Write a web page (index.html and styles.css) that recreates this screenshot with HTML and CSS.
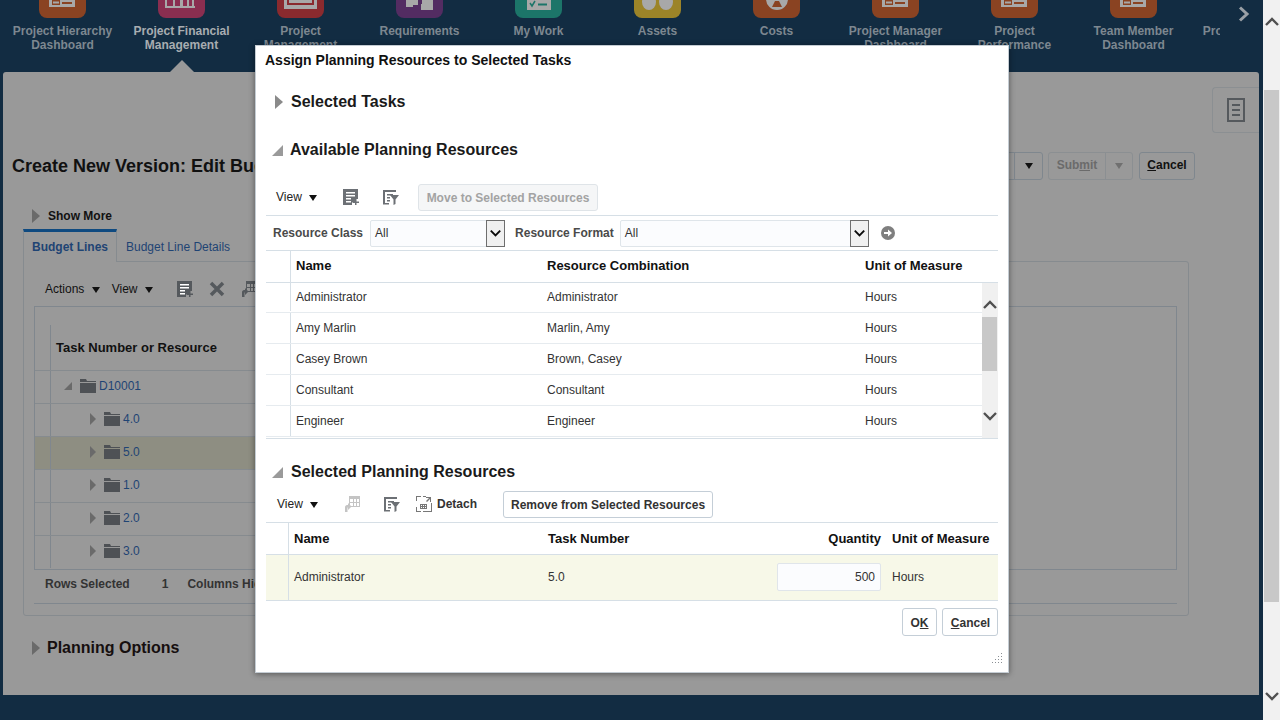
FILE: index.html
```html
<!DOCTYPE html>
<html lang="en">
<head>
    <meta charset="UTF-8">
    <title>Assign Planning Resources to Selected Tasks</title>
    <link rel="stylesheet" href="styles.css">
</head>
<body>
    <svg class="icon-defs" width="0" height="0">
        <symbol id="i-card" viewBox="0 0 47 18"><path d="M10 0h26v7H10z" fill="#a8a8a8"/><path d="M13 0h8v5h-8zM23 2h10v2H23z" fill="currentColor"/><path d="M14 1.500h6v2h-6z" fill="#a8a8a8"/></symbol>
        <symbol id="i-add" viewBox="0 0 16 16"><path d="M0 0h15v10h-3v3H9v3H0z" fill="currentColor"/><path d="M3 3h9v1.500H3zM3 6h9v1.500H3zM3 9h5v1.500H3zM3 12h5v1.500H3z" fill="#fff"/><path d="M12 10h1.500v2.500H16V14h-2.500v2H12v-2H9.500v-1.500H12z" fill="currentColor"/></symbol>
        <symbol id="i-filter" viewBox="0 0 16 16"><path d="M0 1h13v2H0zM0 1h2v14H0zM0 14h6v1.500H0zM4 5h6v1.500H4zM4 8h3v1.500H4zM4 11h3v1.500H4z" fill="currentColor"/><path d="M7 6h9l-3.500 4.500V15l-2 1v-5.500z" fill="currentColor"/></symbol>
        <symbol id="i-move" viewBox="0 0 16 16"><path d="M5 0h11v3H5zM5 3h1v8H5zM15 3h1v8h-1zM5 10h11v1H5zM5 6h11v1H5zM9 3h1v8H9zM12 3h1v8h-1z" fill="currentColor"/><path d="M1 16v-5c0-1 1-2 2-2h1V7l3.500 3.500L4 14v-2.500H3.500V16z" fill="currentColor"/></symbol>
        <symbol id="i-folder" viewBox="0 0 16 14"><path d="M0 0h6l1 2h9v1H0zM0 4h16v10H0z" fill="currentColor"/></symbol>
        <symbol id="i-detach" viewBox="0 0 16 16"><path d="M0 0h5v1H1v4H0zM0 11h1v4h4v1H0zM7 15h9v1H7zM15 7h1v9h-1zM7 0h3v1H7z" fill="#777"/><path d="M4 8h7v5H4zM5 9v1h1V9zm2 0v1h1V9zm2 0v1h1V9zm-4 2v1h1v-1zm2 0v1h1v-1zm2 0v1h1v-1z" fill="#777"/><path d="M10 1h5v5h-1V3l-3 3-1-1 3-3h-3z" fill="#777"/></symbol>
        <symbol id="i-chev-up" viewBox="0 0 14 10"><path d="M1 8l6-6 6 6" fill="none" stroke="currentColor" stroke-width="2.400"/></symbol>
        <symbol id="i-chev-down" viewBox="0 0 14 10"><path d="M1 2l6 6 6-6" fill="none" stroke="currentColor" stroke-width="2.400"/></symbol>
    </svg>

    <div class="page">
        <nav class="nav">
            <div class="nav-list">
                <a class="nav-item"><span class="tile tile-orange"><svg width="47" height="18"><use href="#i-card"/></svg></span><span class="nav-label">Project Hierarchy Dashboard</span></a>
                <a class="nav-item active"><span class="tile tile-pink"><svg width="47" height="18" viewBox="0 0 47 18"><path d="M7 0h2v6h6V0h2v6h5V0h3v6h4V0h2v6h3V0h2v6h1v2H7z" fill="#a8a8a8"/></svg></span><span class="nav-label">Project Financial Management</span></a>
                <a class="nav-item"><span class="tile tile-red"><svg width="47" height="18" viewBox="0 0 47 18"><path d="M7 0h33v9H7z" fill="#a8a8a8"/><path d="M10 0h27v5H10z" fill="#8a2a2e"/><path d="M12 0h23v3H12z" fill="#a8a8a8"/></svg></span><span class="nav-label">Project Management Dashboard</span></a>
                <a class="nav-item"><span class="tile tile-purple"><svg width="47" height="18" viewBox="0 0 47 18"><path d="M10 0h12v5h-5v2h-7zM26 0h11v10H25V4h1z" fill="#a8a8a8"/></svg></span><span class="nav-label">Requirements</span></a>
                <a class="nav-item"><span class="tile tile-teal"><svg width="47" height="18" viewBox="0 0 47 18"><path d="M12 0h24v10H12z" fill="#a8a8a8"/><path d="M15 3l2 3 3-5" fill="none" stroke="#1c7569" stroke-width="1.500"/><path d="M23 3.500h9v2h-9z" fill="#1c7569"/></svg></span><span class="nav-label">My Work</span></a>
                <a class="nav-item"><span class="tile tile-yellow"><svg width="47" height="18" viewBox="0 0 47 18"><ellipse cx="15" cy="2" rx="7" ry="8" fill="#a8a8a8"/><ellipse cx="32" cy="2" rx="7" ry="8" fill="#a8a8a8"/></svg></span><span class="nav-label">Assets</span></a>
                <a class="nav-item"><span class="tile tile-orange"><svg width="47" height="18" viewBox="0 0 47 18"><circle cx="24" cy="-1" r="11" fill="#a8a8a8"/><path d="M19 7l3-6h4l3 6z" fill="#8a4322"/></svg></span><span class="nav-label">Costs</span></a>
                <a class="nav-item"><span class="tile tile-orange"><svg width="47" height="18"><use href="#i-card"/></svg></span><span class="nav-label">Project Manager Dashboard</span></a>
                <a class="nav-item"><span class="tile tile-orange"><svg width="47" height="18"><use href="#i-card"/></svg></span><span class="nav-label">Project Performance Dashboard</span></a>
                <a class="nav-item"><span class="tile tile-orange"><svg width="47" height="18"><use href="#i-card"/></svg></span><span class="nav-label">Team Member Dashboard</span></a>
                <a class="nav-item"><span class="tile"></span><span class="nav-label">Project Hierarchy</span></a>
            </div>
            <svg class="nav-next" width="14" height="16" viewBox="0 0 14 16"><path d="M3 1.500L10 8l-7 6.500" fill="none" stroke="currentColor" stroke-width="3"/></svg>
        </nav>

        <main class="panel">
            <div class="side-row">
                <div class="side-tab">
                    <svg width="18" height="24" viewBox="0 0 18 24"><path d="M1 1h16v22H1z" fill="none" stroke="currentColor" stroke-width="2"/><path d="M5 6h8v2H5zM5 11h8v2H5zM5 16h8v2H5z" fill="currentColor"/></svg>
                </div>
            </div>

            <div class="title-row">
                <h1 class="page-title">Create New Version: Edit Budget</h1>
                <div class="page-actions">
                    <span class="split-btn"><span class="split-caret"><i class="caret"></i></span></span>
                    <span class="submit-btn"><span class="submit-text">Sub<u>m</u>it</span><span class="split-caret"><i class="caret caret-dim"></i></span></span>
                    <span class="back-btn"><u>C</u>ancel</span>
                </div>
            </div>

            <div class="show-more"><i class="tri-right tri-back"></i>Show More</div>

            <div class="tabs">
                <span class="tab tab-active">Budget Lines</span>
                <span class="tab">Budget Line Details</span>
            </div>

            <section class="tab-box">
                <div class="back-toolbar">
                    <span class="menu-item">Actions <i class="caret"></i></span>
                    <span class="menu-item">View <i class="caret"></i></span>
                    <svg class="back-icon first" width="16" height="16"><use href="#i-add"/></svg>
                    <svg class="back-icon" width="16" height="16" viewBox="0 0 16 16"><path d="M2 2l12 12M14 2L2 14" stroke="currentColor" stroke-width="3.500"/></svg>
                    <svg class="back-icon" width="16" height="16"><use href="#i-move"/></svg>
                </div>
                <div class="back-table">
                    <div class="tree">
                        <div class="tree-head"><span class="tree-gutter"></span><span class="tree-title">Task Number or Resource</span></div>
                        <div class="tree-row"><span class="tree-gutter"></span><span class="tree-cell depth-0"><i class="tri-open tri-small"></i><svg class="folder" width="16" height="14"><use href="#i-folder"/></svg><a>D10001</a></span></div>
                        <div class="tree-row"><span class="tree-gutter"></span><span class="tree-cell depth-1"><i class="tri-right tri-small"></i><svg class="folder" width="16" height="14"><use href="#i-folder"/></svg><a>4.0</a></span></div>
                        <div class="tree-row selected"><span class="tree-gutter"></span><span class="tree-cell depth-1"><i class="tri-right tri-small"></i><svg class="folder" width="16" height="14"><use href="#i-folder"/></svg><a>5.0</a></span></div>
                        <div class="tree-row"><span class="tree-gutter"></span><span class="tree-cell depth-1"><i class="tri-right tri-small"></i><svg class="folder" width="16" height="14"><use href="#i-folder"/></svg><a>1.0</a></span></div>
                        <div class="tree-row"><span class="tree-gutter"></span><span class="tree-cell depth-1"><i class="tri-right tri-small"></i><svg class="folder" width="16" height="14"><use href="#i-folder"/></svg><a>2.0</a></span></div>
                        <div class="tree-row"><span class="tree-gutter"></span><span class="tree-cell depth-1"><i class="tri-right tri-small"></i><svg class="folder" width="16" height="14"><use href="#i-folder"/></svg><a>3.0</a></span></div>
                    </div>
                </div>
                <div class="back-status"><span>Rows Selected</span><span class="status-num">1</span><span>Columns Hidden</span></div>
            </section>

            <div class="planning"><i class="tri-right tri-back"></i>Planning Options</div>
        </main>
    </div>

    <div class="page-scroll">
        <svg width="14" height="10"><use href="#i-chev-up"/></svg>
        <div class="page-thumb"></div>
        <svg width="14" height="10"><use href="#i-chev-down"/></svg>
    </div>

    <!-- dialog -->
    <div class="dialog">
        <div class="dialog-title">Assign Planning Resources to Selected Tasks</div>

        <h2 class="section-head closed"><i class="tri-right"></i>Selected Tasks</h2>
        <h2 class="section-head available"><i class="tri-open"></i>Available Planning Resources</h2>

        <div class="toolbar toolbar-top">
            <span class="view-menu">View <i class="caret"></i></span>
            <svg class="tool-icon add" width="16" height="16"><use href="#i-add"/></svg>
            <svg class="tool-icon filter" width="16" height="16"><use href="#i-filter"/></svg>
            <button class="btn btn-disabled">Move to Selected Resources</button>
        </div>

        <div class="filter-row">
            <label class="filter-label">Resource Class</label>
            <span class="select select-class"><span class="select-value">All</span><span class="select-arrow"><svg width="11" height="8"><use href="#i-chev-down"/></svg></span></span>
            <label class="filter-label">Resource Format</label>
            <span class="select select-format"><span class="select-value">All</span><span class="select-arrow"><svg width="11" height="8"><use href="#i-chev-down"/></svg></span></span>
            <svg class="go-icon" width="14" height="14" viewBox="0 0 14 14"><circle cx="7" cy="7" r="7" fill="#7f7f7f"/><path d="M3 6h4V3.500L11 7l-4 3.500V8H3z" fill="#fff"/></svg>
        </div>

        <div class="res-row res-head">
            <span class="gutter"></span><span>Name</span><span>Resource Combination</span><span>Unit of Measure</span>
        </div>

        <div class="res-list">
            <div class="res-rows">
                <div class="res-row"><span class="gutter"></span><span>Administrator</span><span>Administrator</span><span>Hours</span></div>
                <div class="res-row"><span class="gutter"></span><span>Amy Marlin</span><span>Marlin, Amy</span><span>Hours</span></div>
                <div class="res-row"><span class="gutter"></span><span>Casey Brown</span><span>Brown, Casey</span><span>Hours</span></div>
                <div class="res-row"><span class="gutter"></span><span>Consultant</span><span>Consultant</span><span>Hours</span></div>
                <div class="res-row"><span class="gutter"></span><span>Engineer</span><span>Engineer</span><span>Hours</span></div>
            </div>
            <div class="list-scroll">
                <svg width="14" height="10"><use href="#i-chev-up"/></svg>
                <div class="list-thumb"></div>
                <svg class="list-down" width="14" height="10"><use href="#i-chev-down"/></svg>
            </div>
        </div>

        <h2 class="section-head selected-head"><i class="tri-open"></i>Selected Planning Resources</h2>

        <div class="toolbar toolbar-sel">
            <span class="view-menu">View <i class="caret"></i></span>
            <svg class="tool-icon move" width="16" height="16"><use href="#i-move"/></svg>
            <svg class="tool-icon filter" width="16" height="16"><use href="#i-filter"/></svg>
            <svg class="tool-icon detach" width="16" height="16"><use href="#i-detach"/></svg>
            <span class="detach-text">Detach</span>
            <button class="btn">Remove from Selected Resources</button>
        </div>

        <div class="sel-row sel-head">
            <span class="gutter"></span><span>Name</span><span>Task Number</span><span class="qty">Quantity</span><span>Unit of Measure</span>
        </div>
        <div class="sel-row sel-body">
            <span class="gutter"></span><span>Administrator</span><span>5.0</span><span class="qty"><span class="qty-input">500</span></span><span>Hours</span>
        </div>

        <div class="dialog-actions">
            <button class="btn btn-ok">O<u>K</u></button>
            <button class="btn btn-cancel"><u>C</u>ancel</button>
        </div>

        <svg class="grip" width="11" height="11" viewBox="0 0 11 11"><path d="M9 0h1v1H9zM6 3h1v1H6zM9 3h1v1H9zM3 6h1v1H3zM6 6h1v1H6zM9 6h1v1H9zM0 9h1v1H0zM3 9h1v1H3zM6 9h1v1H6zM9 9h1v1H9z" fill="#8a8f94"/></svg>
    </div>
</body>
</html>
```

FILE: styles.css
```css
* {
    box-sizing: border-box;
    margin: 0;
    padding: 0;
}

html, body {
    height: 720px;
    overflow: hidden;
}

body {
    background-color: #122c42;
    color: #111;
    font-family: "Liberation Sans", Arial, sans-serif;
    font-size: 12px;
    position: relative;
    width: 1280px;
}

.icon-defs {
    position: absolute;
}

.page {
    width: 1263px;
}

/* top navigation */
.nav {
    display: flex;
    height: 72px;
    padding-left: 3px;
    position: relative;
}

.nav-list {
    display: flex;
    overflow: hidden;
    width: 1217px;
}

.nav-item {
    align-items: center;
    color: #7d8790;
    display: flex;
    flex: none;
    flex-direction: column;
    font-weight: bold;
    position: relative;
    width: 119px;
}

.nav-item.active {
    color: #a8adb1;
}

.nav-item.active::after {
    border-bottom: 12px solid #999;
    border-left: 12px solid transparent;
    border-right: 12px solid transparent;
    bottom: 0;
    content: "";
    left: 48px;
    position: absolute;
}

.tile {
    border-radius: 0 0 8px 8px;
    color: #8a4322;
    display: block;
    height: 18px;
    overflow: hidden;
    width: 47px;
}

.tile svg {
    display: block;
}

.tile-orange { background-color: #8a4322; }
.tile-pink { background-color: #8a2e50; }
.tile-red { background-color: #8a2a2e; }
.tile-purple { background-color: #532c62; }
.tile-teal { background-color: #1c7569; }
.tile-yellow { background-color: #9c8428; }

.nav-label {
    line-height: 14px;
    margin-top: 6px;
    max-height: 30px;
    overflow: hidden;
    text-align: center;
    width: 105px;
}

.nav-next {
    color: #9aa0a6;
    margin: 6px 0 0 17px;
}

/* page behind the dialog */
.panel {
    background-color: #999;
    border-radius: 3px 3px 0 0;
    height: 623px;
    margin: 0 4px 0 3px;
}

.side-row {
    display: flex;
    justify-content: flex-end;
    padding-top: 15px;
}

.side-tab {
    align-items: center;
    border: 1px solid #8b8f92;
    border-radius: 4px 0 0 4px;
    border-right: 0;
    color: #55595d;
    display: flex;
    height: 46px;
    justify-content: center;
    width: 47px;
}

.title-row {
    align-items: center;
    display: flex;
    height: 29px;
    justify-content: space-between;
    margin-top: 19px;
    padding: 0 64px 0 9px;
}

.page-title {
    font-size: 18px;
}

.page-actions {
    align-items: center;
    align-self: flex-start;
    display: flex;
}

.split-btn,
.submit-btn,
.back-btn {
    align-items: center;
    border: 1px solid #7f878e;
    border-radius: 3px;
    display: flex;
    height: 28px;
}

.split-btn {
    justify-content: flex-end;
    margin-right: 5px;
    width: 60px;
}

.split-caret {
    align-items: center;
    border-left: 1px solid #7f878e;
    display: flex;
    height: 26px;
    justify-content: center;
    width: 28px;
}

.submit-btn {
    border-color: #8b8f92;
    color: #6b6b6b;
    font-weight: bold;
    margin-right: 6px;
    width: 85px;
}

.submit-btn .split-caret {
    border-left-color: #8b8f92;
    width: 27px;
}

.submit-text {
    flex: 1;
    padding-bottom: 2px;
    text-align: center;
}

.back-btn {
    font-weight: bold;
    justify-content: center;
    padding-bottom: 2px;
    width: 56px;
}

.caret {
    border-left: 4.500px solid transparent;
    border-right: 4.500px solid transparent;
    border-top: 6px solid #111;
    display: inline-block;
    margin-left: 4px;
    vertical-align: middle;
}

.caret-dim {
    border-top-color: #707070;
    margin-left: 0;
}

.split-caret .caret {
    margin-left: 0;
}

.tri-right {
    border-bottom: 7px solid transparent;
    border-left: 8px solid #6a6a6a;
    border-top: 7px solid transparent;
    display: inline-block;
}

.tri-open {
    border-bottom: 11px solid #9a9a9a;
    border-left: 11px solid transparent;
    display: inline-block;
}

.tri-small {
    border-bottom-width: 6px;
    border-left-width: 6px;
    border-top-width: 6px;
}

.tri-open.tri-small {
    border-bottom: 8px solid #6a6a6a;
    border-left: 8px solid transparent;
}

.show-more {
    align-items: center;
    display: flex;
    font-weight: bold;
    height: 18px;
    margin-top: 26px;
    padding-left: 29px;
}

.tri-back {
    margin-right: 8px;
}

.tabs {
    display: flex;
    height: 32px;
    margin: 4px 0 0 20px;
}

.tab {
    align-items: center;
    color: #1f4474;
    display: flex;
    padding: 3px 9px 0;
    white-space: nowrap;
}

.tab-active {
    background-color: #999;
    border-left: 1px solid #868b8f;
    border-right: 1px solid #868b8f;
    border-top: 3px solid #0f4a80;
    font-weight: bold;
    margin-bottom: -1px;
    padding: 0 0 0 8px;
    position: relative;
    width: 94px;
}

.tab-box {
    border: 1px solid #868b8f;
    border-radius: 0 3px 3px 3px;
    height: 355px;
    margin-left: 20px;
    padding: 0 10px;
    width: 1166px;
}

.back-toolbar {
    align-items: center;
    display: flex;
    height: 44px;
    padding: 10px 0 0 11px;
}

.menu-item {
    margin-right: 12px;
}

.back-icon {
    color: #55595d;
    margin-right: 16px;
}

.back-icon.first {
    margin-left: 12px;
}

.back-table {
    border: 1px solid #80878e;
    height: 264px;
    width: 1143px;
}

.tree {
    width: 400px;
}

.tree-head {
    display: flex;
    height: 63px;
    padding-top: 18px;
}

.tree-head .tree-gutter {
    border-right: 1px solid #80878e;
}

.tree-title {
    align-self: center;
    font-size: 13px;
    font-weight: bold;
    padding-left: 5px;
}

.tree-gutter {
    flex: none;
    width: 16px;
}

.tree-row {
    border-top: 1px solid #868b8f;
    display: flex;
    height: 33px;
}

.tree-row .tree-gutter {
    border-right: 1px solid #80878e;
}

.tree-row.selected {
    background-color: #8e8e82;
}

.tree-cell {
    align-items: center;
    display: flex;
    flex: 1;
    padding-bottom: 2px;
}

.tree-cell a {
    color: #1f4474;
    margin-left: 3px;
}

.depth-0 {
    padding-left: 13px;
}

.depth-1 {
    padding-left: 39px;
}

.tree-cell .folder {
    color: #4e5155;
    margin-left: 8px;
}

.back-status {
    align-items: center;
    border-bottom: 1px solid #80878e;
    color: #333;
    display: flex;
    font-weight: bold;
    height: 34px;
    padding: 0 0 6px 11px;
    width: 1143px;
}

.status-num {
    margin: 0 19px 0 32px;
}

.planning {
    align-items: center;
    color: #160f0f;
    display: flex;
    font-size: 16px;
    font-weight: bold;
    height: 20px;
    margin-top: 22px;
    padding-left: 29px;
}

.planning .tri-back {
    margin-right: 7px;
}

/* browser scrollbar */
.page-scroll {
    align-items: center;
    background-color: #f1f1f1;
    bottom: 0;
    color: #505050;
    display: flex;
    flex-direction: column;
    position: absolute;
    right: 0;
    top: 0;
    width: 17px;
}

.page-scroll svg:first-child {
    margin-top: 17px;
}

.page-thumb {
    background-color: #c8c8c8;
    height: 512px;
    margin: 63px 0 89px;
    width: 15px;
}

/* dialog */
.dialog {
    background-color: #fff;
    border: 1px solid #c4ccd3;
    box-shadow: 0 1px 6px rgba(0, 0, 0, 0.45);
    height: 628px;
    left: 255px;
    padding: 0 10px;
    position: absolute;
    top: 45px;
    width: 754px;
}

.dialog-title {
    align-items: center;
    color: #111;
    display: flex;
    font-size: 14px;
    font-weight: bold;
    height: 28px;
    margin-left: -1px;
}

.section-head {
    align-items: center;
    color: #1a1a1a;
    display: flex;
    font-size: 16px;
    height: 22px;
}

.section-head.closed {
    margin-top: 17px;
    padding-left: 9px;
}

.section-head.closed .tri-right {
    border-left-color: #8a8a8a;
    margin-right: 8px;
}

.section-head.available {
    margin-top: 26px;
    padding-left: 6px;
}

.section-head.available .tri-open {
    margin-right: 7px;
}

.section-head.selected-head {
    margin-top: 22px;
    padding-left: 6px;
}

.section-head.selected-head .tri-open {
    margin-right: 8px;
}

.toolbar {
    align-items: center;
    border-bottom: 1px solid #d6dfe6;
    display: flex;
}

.toolbar-top {
    height: 34px;
    margin-top: 21px;
    padding: 0 0 3px 10px;
}

.toolbar-sel {
    height: 40px;
    padding: 3px 0 0 11px;
}

.view-menu {
    color: #222;
}

.toolbar-top .view-menu {
    width: 67px;
}

.toolbar-sel .view-menu {
    width: 67px;
}

.tool-icon {
    color: #6c7075;
    flex: none;
}

.tool-icon.filter {
    margin-left: 24px;
}

.tool-icon.move {
    color: #c4c4c4;
}

.tool-icon.detach {
    margin-left: 16px;
}

.detach-text {
    color: #333;
    font-weight: bold;
    margin-left: 5px;
}

.btn {
    background-color: #fff;
    border: 1px solid #c4ced7;
    border-radius: 3px;
    color: #333;
    font-family: inherit;
    font-size: 12px;
    font-weight: bold;
    height: 28px;
    padding: 0;
    white-space: nowrap;
}

.toolbar-top .btn {
    height: 27px;
    margin: 1px 0 0 19px;
    width: 180px;
}

.toolbar-sel .btn {
    height: 27px;
    margin: 1px 0 0 26px;
    width: 210px;
}

.btn-disabled {
    background-color: #f5f6f7;
    border-color: #dfe4e8;
    color: #a3a3a3;
}

.filter-row {
    align-items: center;
    border-bottom: 1px solid #d6dfe6;
    display: flex;
    height: 35px;
    padding-left: 7px;
}

.filter-label {
    color: #4a4a4a;
    font-weight: bold;
}

.select {
    background-color: #fbfcfe;
    border: 1px solid #dfe5ea;
    border-radius: 2px;
    display: flex;
    height: 27px;
    margin: 0 10px 0 7px;
}

.select-class {
    width: 135px;
}

.select-format {
    margin-left: 6px;
    width: 249px;
}

.select-value {
    align-self: center;
    color: #333;
    flex: 1;
    padding-left: 4px;
}

.select-arrow {
    align-items: center;
    background-color: #f0f0f0;
    border: 1px solid #6e6e6e;
    color: #0a0a0a;
    display: flex;
    justify-content: center;
    margin: -1px -1px -1px 0;
    width: 19px;
}

.go-icon {
    margin-left: 2px;
}

.res-row {
    align-items: center;
    border-bottom: 1px solid #e6ebef;
    color: #333;
    display: grid;
    grid-template-columns: 25px 251px 318px 1fr;
    height: 31px;
}

.res-row > span:not(.gutter) {
    padding-left: 5px;
}

.res-rows .res-row:first-child {
    height: 30px;
    padding-bottom: 1px;
}

.gutter {
    align-self: stretch;
    border-right: 1px solid #d6dfe6;
}

.res-head {
    border-bottom: 1px solid #d6dfe6;
    color: #111;
    font-size: 13px;
    font-weight: bold;
    height: 32px;
    padding-bottom: 2px;
}

.res-head .gutter {
    margin-bottom: -2px;
}

.res-list {
    border-bottom: 1px solid #d6dfe6;
    display: flex;
    height: 156px;
    overflow: hidden;
}

.res-rows {
    flex: 1;
}

.list-scroll {
    align-items: center;
    background-color: #f0f0f0;
    color: #505050;
    display: flex;
    flex: none;
    flex-direction: column;
    width: 16px;
}

.list-scroll svg:first-child {
    margin-top: 17px;
}

.list-thumb {
    background-color: #c8c8c8;
    height: 54px;
    margin: 7px 1px 0 0;
    width: 15px;
}

.list-down {
    margin-top: 40px;
}

.sel-row {
    align-items: center;
    border-bottom: 1px solid #d6dfe6;
    display: grid;
    grid-template-columns: 23px 254px 227px 117px 1fr;
}

.sel-row > span:not(.gutter) {
    padding-left: 5px;
}

.sel-row > .qty {
    padding-left: 0;
    padding-right: 6px;
    text-align: right;
}

.sel-head {
    color: #111;
    font-size: 13px;
    font-weight: bold;
    height: 32px;
}

.sel-body {
    background-color: #f7f8e8;
    color: #333;
    height: 46px;
    padding-bottom: 2px;
}

.sel-body .gutter {
    margin-bottom: -2px;
}

.qty-input {
    background-color: #fbfcfe;
    border: 1px solid #e0e5ea;
    border-radius: 2px;
    display: inline-block;
    height: 28px;
    line-height: 26px;
    padding-right: 5px;
    width: 104px;
}

.dialog-actions {
    display: flex;
    gap: 5px;
    justify-content: flex-end;
    margin-top: 7px;
}

.btn-ok {
    padding-top: 1px;
    width: 35px;
}

.btn-cancel {
    padding: 1px 0 0 1px;
    width: 56px;
}

.grip {
    bottom: 8px;
    position: absolute;
    right: 5px;
}
```
